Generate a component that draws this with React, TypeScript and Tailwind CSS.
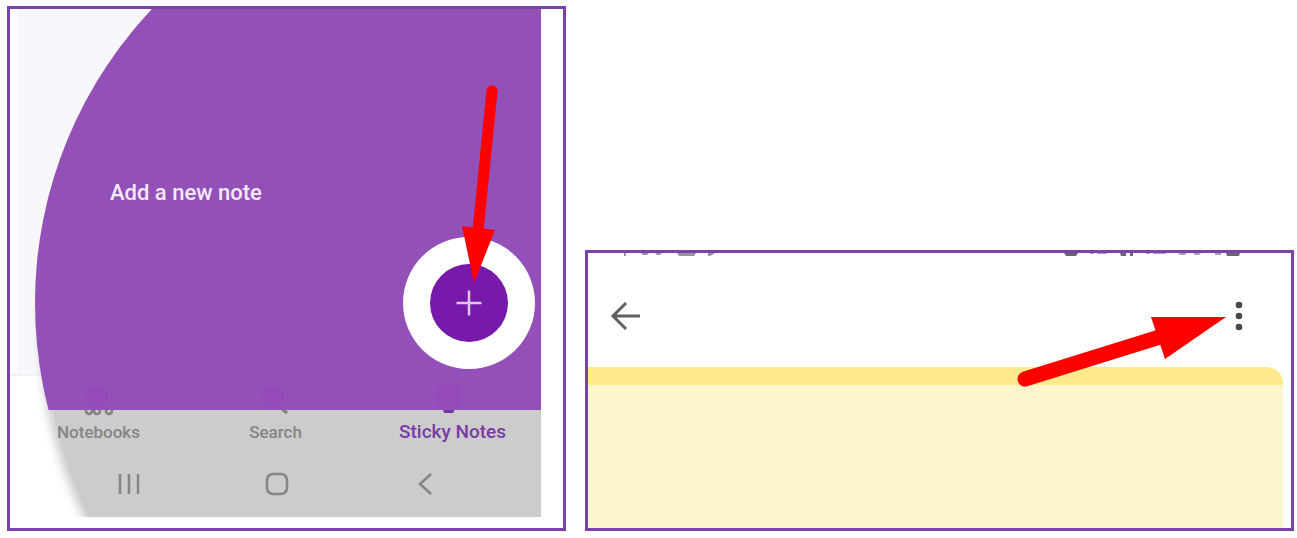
const tabs = [
  { label: "Notebooks", style: "text-[17px] text-[#858585]" },
  { label: "Search", style: "text-[17px] text-[#858585]" },
  { label: "Sticky Notes", style: "text-[19px] text-[#7a3aa6]" },
];

function Backdrop() {
  return (
    <svg
      className="absolute inset-0 h-full w-full"
      viewBox="0 0 531 508"
      preserveAspectRatio="xMaxYMin slice"
      aria-hidden="true"
    >
      <defs>
        <filter id="soft" x="-10%" y="-10%" width="120%" height="120%">
          <feGaussianBlur stdDeviation="5" />
        </filter>
        <clipPath id="above">
          <rect width="531" height="401" />
        </clipPath>
      </defs>
      <rect x="7" width="524" height="366" fill="#f8f7fb" />
      <rect x="0" y="365" width="531" height="2" fill="#f3f3f3" />
      <circle cx="460" cy="320" r="430" fill="#cccccc" filter="url(#soft)" />
      <circle cx="460" cy="320" r="425" fill="#cccccc" />
      <g fill="none" stroke="#808080" strokeWidth="2.500">
        <circle cx="79" cy="402" r="3" />
        <circle cx="87" cy="402" r="3" />
        <circle cx="99" cy="402" r="3" />
        <path d="M271 399l6 5" strokeWidth="3" />
      </g>
      <path d="M433 400h12l-2 4h-9z" fill="#7636a3" />
      <g clipPath="url(#above)">
        <circle cx="453" cy="294" r="428" fill="#9450b9" />
        <g fill="#944bb9">
          <circle cx="87" cy="388" r="11" />
          <circle cx="263" cy="388" r="11" />
          <rect x="427" y="375" width="24" height="24" rx="4" />
        </g>
      </g>
    </svg>
  );
}

function AddNotePanel() {
  return (
    <section className="border-3 border-[#7b43a8] bg-white pr-[22px] pb-[11px]">
      <div className="relative overflow-hidden">
        <Backdrop />
        <div className="relative flex h-[401px] flex-col pt-[172px]">
          <p className="pl-[100px] text-[22px] leading-6 font-medium text-[#f3e9f8]">Add a new note</p>
          <div className="mt-8 flex justify-end pr-1.5">
            <button
              type="button"
              aria-label="Add note"
              className="flex size-[132px] items-center justify-center rounded-full bg-white"
            >
              <span className="flex size-[78px] items-center justify-center rounded-full bg-[#7719aa]">
                <svg className="size-7" viewBox="0 0 28 28" fill="none" stroke="#dfc4ed" strokeWidth="2.500">
                  <path d="M14 1.500v25M1.500 14h25" />
                </svg>
              </span>
            </button>
          </div>
          <svg className="pointer-events-none absolute top-0 right-0 h-[300px] w-[100px]" viewBox="0 0 100 300" aria-hidden="true">
            <path d="M51 82L37 222" stroke="#ff0000" strokeWidth="11" strokeLinecap="round" />
            <path d="M21 217L54 221L33 274Z" fill="#ff0000" />
          </svg>
        </div>
        <div className="relative h-[107px] pt-2.5">
          <nav className="grid grid-cols-3">
            {tabs.map((tab) => (
              <button key={tab.label} type="button" className={`leading-6 font-medium ${tab.style}`}>
                {tab.label}
              </button>
            ))}
          </nav>
          <div className="mt-7 grid grid-cols-3 pr-[42px] pl-[45px]">
            <button type="button" aria-label="Recent apps" className="flex justify-center">
              <svg className="size-6" viewBox="0 0 24 24" stroke="#858585" strokeWidth="2.500">
                <path d="M3 2v20M12 2v20M21 2v20" />
              </svg>
            </button>
            <button type="button" aria-label="Home" className="flex justify-center">
              <svg className="size-6" viewBox="0 0 24 24" fill="none" stroke="#858585" strokeWidth="2.500">
                <rect x="2" y="2" width="20" height="20" rx="6" />
              </svg>
            </button>
            <button type="button" aria-label="Back" className="flex justify-center">
              <svg className="size-6" viewBox="0 0 24 24" fill="none" stroke="#858585" strokeWidth="2.500">
                <path d="M18 2L7 12L18 22" />
              </svg>
            </button>
          </div>
        </div>
      </div>
    </section>
  );
}

function NotePanel() {
  return (
    <section className="relative border-3 border-[#7b43a8] bg-white">
      <div className="flex h-1 items-start justify-between pr-12 pl-8" aria-hidden="true">
        <svg className="h-1 w-24" viewBox="0 0 96 4" fill="#959595">
          <path d="M4 0h2v3h-2zM21 0h8l-2 2h-4zM35 0h7l-2 2h-3zM57 0h19l-2 3h-15zM88 0h7l-5 3h-2z" />
        </svg>
        <svg className="h-1 w-[180px]" viewBox="0 0 180 4">
          <path d="M1 0h14l-2 3h-10zM57 0h6v3h-5zM67 0h3v3h-3zM163 0h14l-1 3h-12z" fill="#686868" />
          <path d="M27 0h4v1h-4zM34 0h10v1h-10zM83 0h4v1h-4zM90 0h13v1h-13zM115 0h9l-2 2h-5zM130 0h8l-2 2h-4zM152 0h6v2h-6z" fill="#a5a5a5" />
        </svg>
      </div>
      <header className="flex h-[110px] items-center justify-between pt-2 pr-10 pl-[22px]">
        <button type="button" aria-label="Back">
          <svg className="size-8" viewBox="0 0 32 32" fill="none" stroke="#606060" strokeWidth="3">
            <path d="M30 16H4M16 3L3 16L16 29" />
          </svg>
        </button>
        <button type="button" aria-label="More options">
          <svg className="h-8 w-6" viewBox="0 0 24 32" fill="#484848">
            <circle cx="12" cy="5" r="3.300" />
            <circle cx="12" cy="16" r="3.300" />
            <circle cx="12" cy="27" r="3.300" />
          </svg>
        </button>
      </header>
      <article className="mr-2 h-[161px] rounded-tr-2xl border-t-18 border-[#ffeb8e] bg-[#fff5cc]" />
      <svg className="pointer-events-none absolute top-0 right-0 h-[140px] w-[300px]" viewBox="0 0 300 140" aria-hidden="true">
        <path d="M34 126L172 83" stroke="#ff0000" strokeWidth="15" strokeLinecap="round" />
        <path d="M160 64H235L174 106Z" fill="#ff0000" />
      </svg>
    </section>
  );
}

export default function App() {
  return (
    <main className="grid grid-cols-[559fr_709fr] items-end gap-x-[19px] bg-white pt-1.5 pr-[3px] pb-1.5 pl-[7px] font-['Roboto','Liberation_Sans',sans-serif]">
      <AddNotePanel />
      <NotePanel />
    </main>
  );
}
